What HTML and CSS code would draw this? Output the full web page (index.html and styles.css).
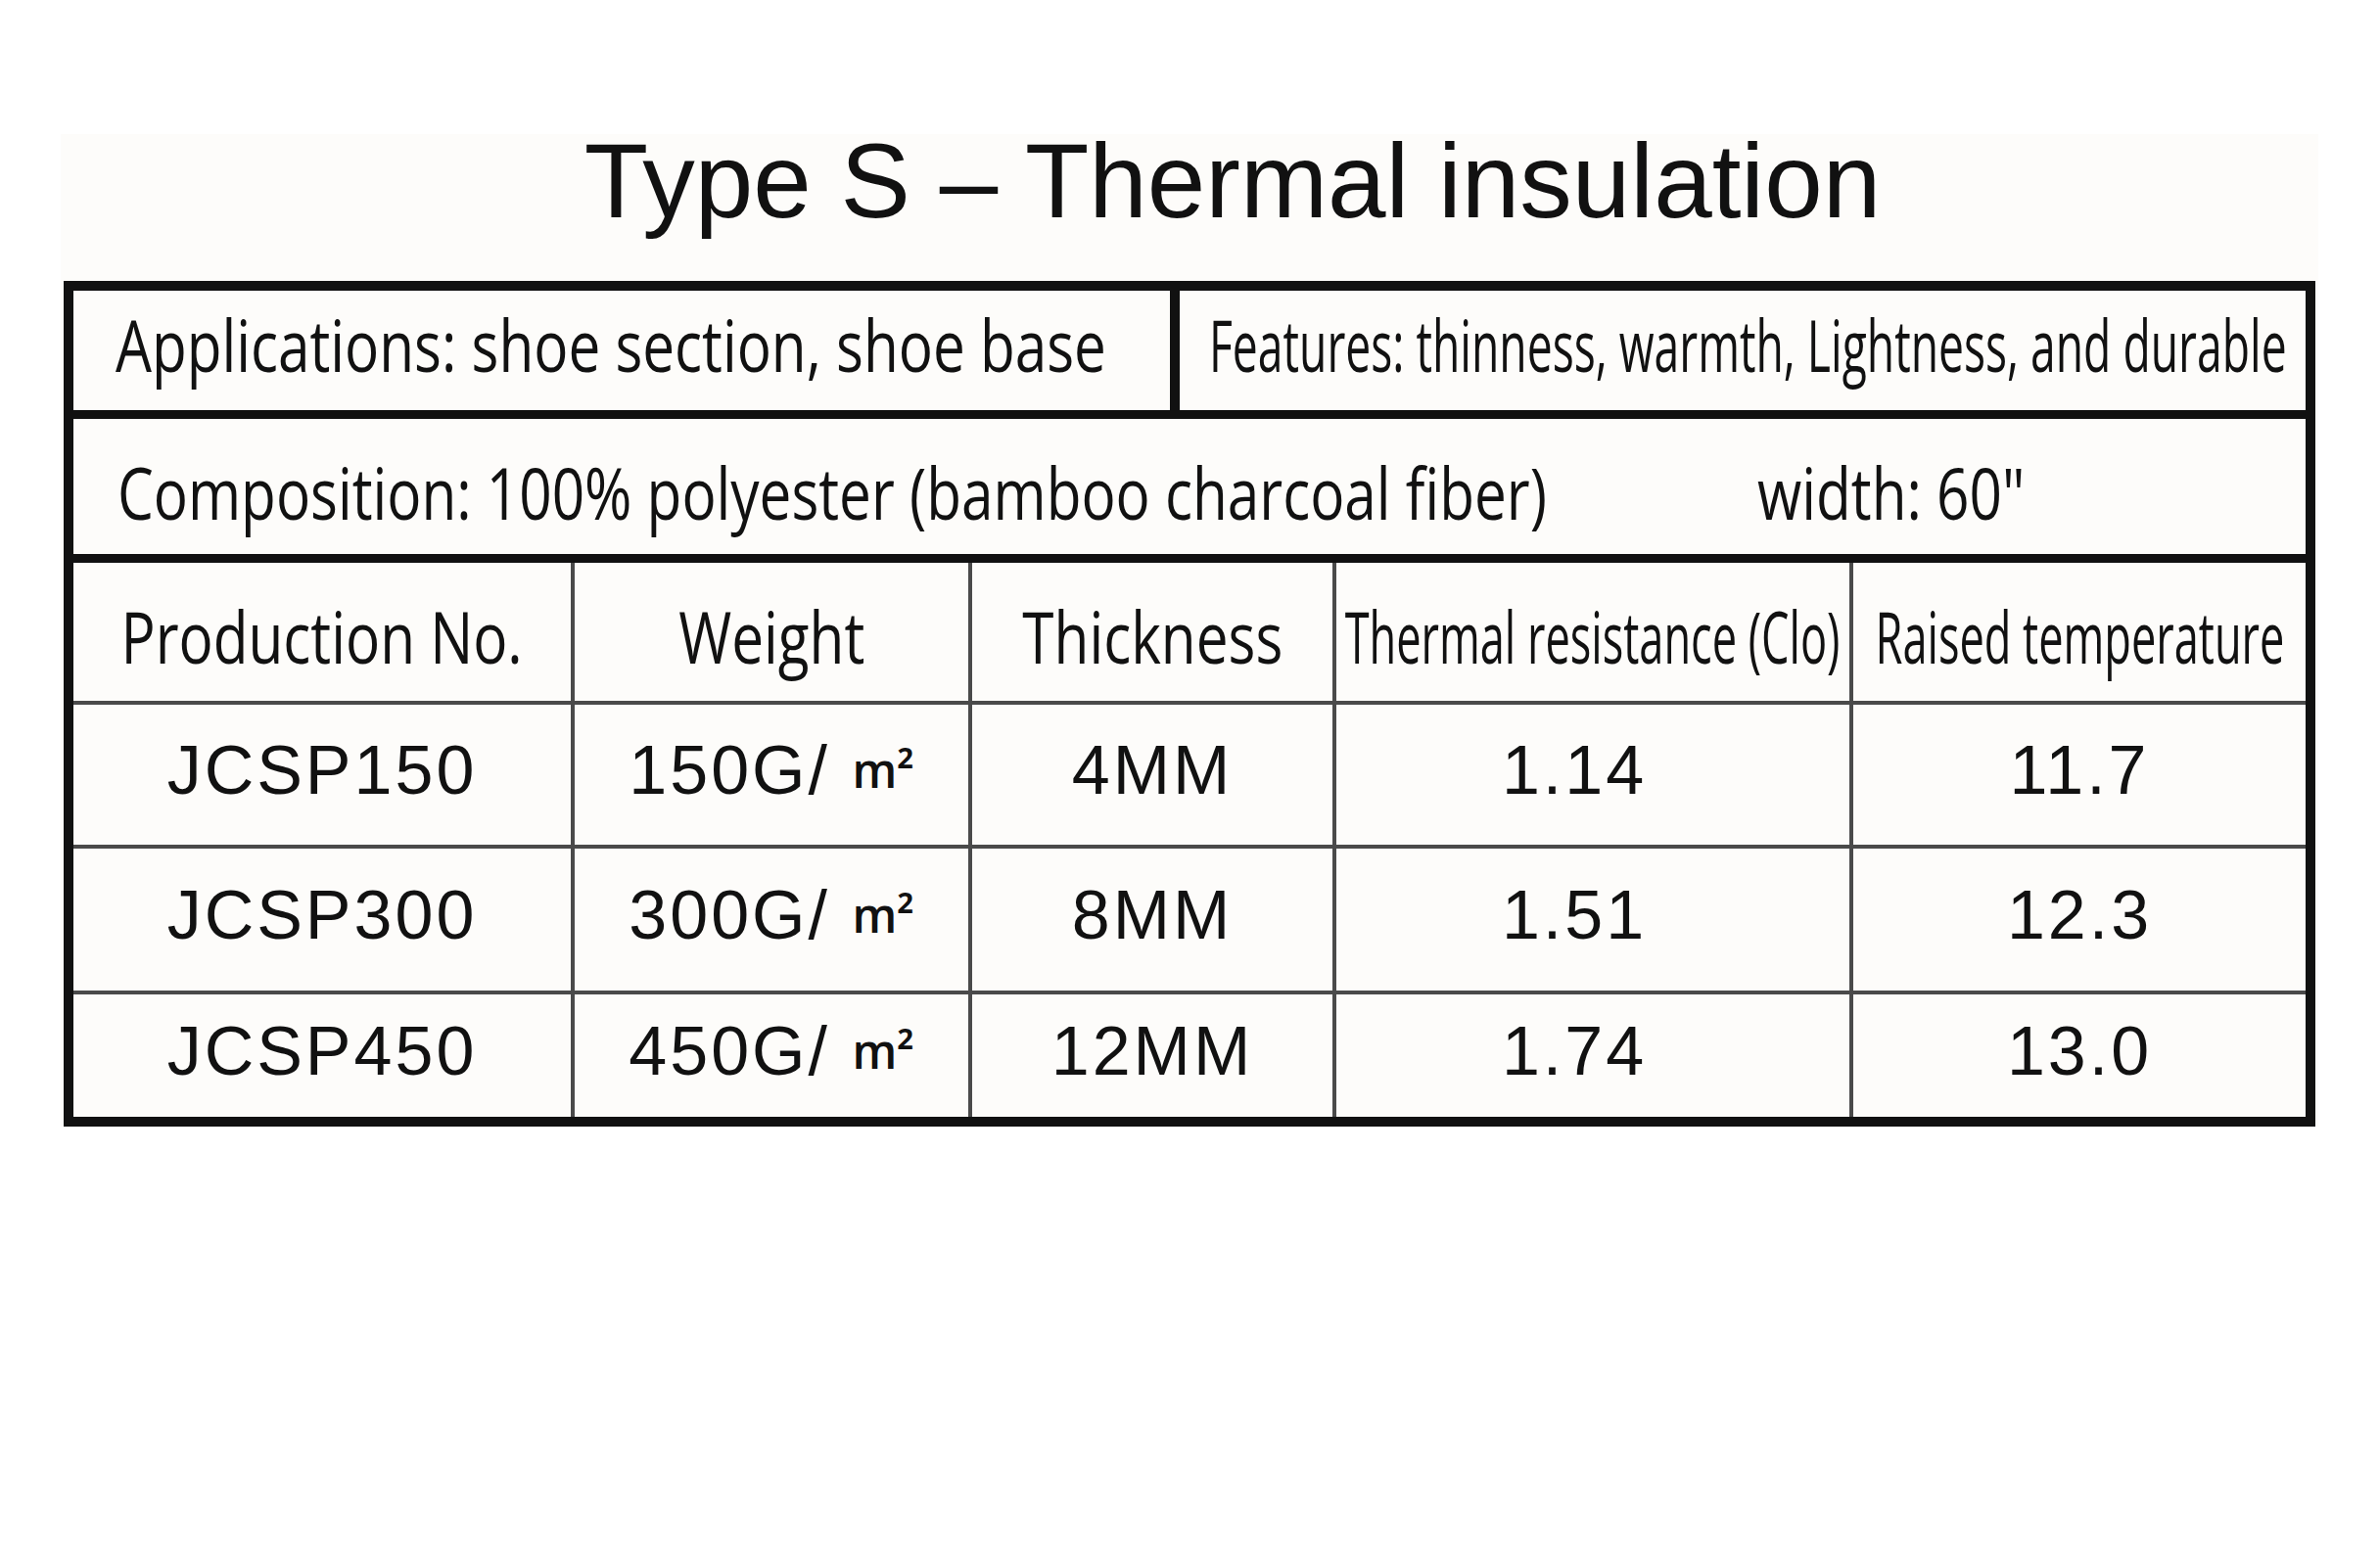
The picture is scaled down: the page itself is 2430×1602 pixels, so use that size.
FILE: index.html
```html
<!DOCTYPE html>
<html lang="en">
<head>
    <meta charset="UTF-8">
    <meta name="viewport" content="width=device-width, initial-scale=1.0">
    <title>Type S - Thermal insulation</title>
    <link rel="stylesheet" href="styles.css">
</head>
<body>

<div class="sheet">
    <h1 class="title">Type S – Thermal insulation</h1>

    <div class="spec">
        <!-- Linha de aplicações / características -->
        <div class="info-top">
            <div class="info-cell apps"><span class="txt">Applications: shoe section, shoe base</span></div>
            <div class="info-cell feats"><span class="txt narrow">Features: thinness, warmth, Lightness, and durable</span></div>
        </div>

        <div class="info-comp">
            <span class="txt">Composition: 100% polyester (bamboo charcoal fiber)</span>
            <span class="txt">width: 60"</span>
        </div>

        <!-- Tabela de produtos -->
        <div class="grid">
            <div class="head"><span class="txt">Production No.</span></div>
            <div class="head"><span class="txt">Weight</span></div>
            <div class="head"><span class="txt">Thickness</span></div>
            <div class="head"><span class="txt narrow">Thermal resistance (Clo)</span></div>
            <div class="head"><span class="txt narrow">Raised temperature</span></div>

            <div class="cell">JCSP150</div>
            <div class="cell">150G/ <span class="unit">m²</span></div>
            <div class="cell">4MM</div>
            <div class="cell shift">1.14</div>
            <div class="cell">11.7</div>

            <div class="cell">JCSP300</div>
            <div class="cell">300G/ <span class="unit">m²</span></div>
            <div class="cell">8MM</div>
            <div class="cell shift">1.51</div>
            <div class="cell">12.3</div>

            <div class="cell">JCSP450</div>
            <div class="cell">450G/ <span class="unit">m²</span></div>
            <div class="cell">12MM</div>
            <div class="cell shift">1.74</div>
            <div class="cell">13.0</div>
        </div>
    </div>
</div>

</body>
</html>
```

FILE: styles.css
```css
body {
    margin: 0;
    background-color: #ffffff;
    color: #111111;
    font-family: "Liberation Sans", Arial, sans-serif;
}

.sheet {
    width: 2306px;
    margin: 137px 0 0 62px;
    background-color: #fdfcfa;
}

.title {
    margin: 0;
    padding-left: 88px;
    font-size: 107px;
    font-weight: normal;
    line-height: 96px;
    text-align: center;
}

.spec {
    width: 2280px;
    margin: 54px 3px 2px;
    border: 10px solid #111111;
    background-color: #111111;
}

/* Texto estreito (parecido com Myriad) */
.txt {
    display: inline-block;
    font-family: "Open Sans", "Noto Sans", sans-serif;
    font-size: 74px;
    line-height: 1;
    white-space: nowrap;
    transform: scaleX(0.79);
    transform-origin: left center;
}

.txt.narrow {
    transform: scaleX(0.61);
}

.feats .txt.narrow {
    transform: scaleX(0.625);
}

.info-top {
    display: grid;
    grid-template-columns: 1120px 1150px;
    column-gap: 10px;
    height: 122px;
}

.info-cell {
    display: flex;
    align-items: center;
    min-width: 0;
    padding-bottom: 12px;
    background-color: #fdfcfa;
}

.apps {
    padding-left: 43px;
}

.feats {
    padding-left: 30px;
}

.info-comp {
    display: grid;
    grid-template-columns: 1675px minmax(0, 1fr);
    align-items: center;
    box-sizing: border-box;
    height: 138px;
    margin-top: 9px;
    padding: 12px 0 0 45px;
    background-color: #fdfcfa;
}

.grid {
    display: grid;
    grid-template-columns: 508px 402px 368px 524px 462px;
    grid-template-rows: 141px 143px 145px 125px;
    gap: 4px;
    margin-top: 9px;
    background-color: #4a4a4a;
}

.head,
.cell {
    display: flex;
    align-items: center;
    justify-content: center;
    min-width: 0;
    background-color: #fdfcfa;
}

.head {
    padding-top: 8px;
}

.head .txt {
    transform-origin: center;
}

.cell {
    padding-bottom: 10px;
    font-size: 70px;
    line-height: 1;
    letter-spacing: 3px;
    white-space: pre;
}

.cell.shift {
    padding-right: 38px;
}

.unit {
    font-family: "Open Sans", "Noto Sans", sans-serif;
    font-size: 48px;
    font-weight: 600;
    letter-spacing: 0;
}
```
